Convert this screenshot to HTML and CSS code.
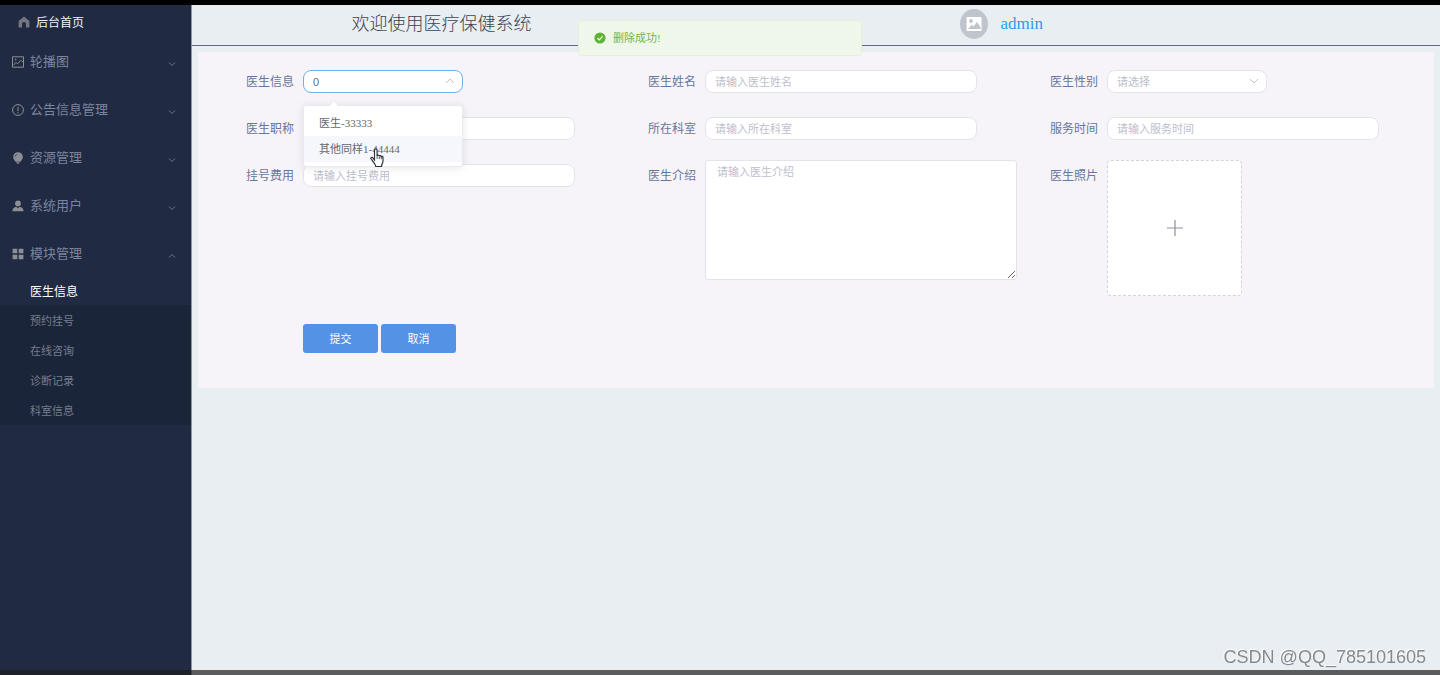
FILE: index.html
```html
<!DOCTYPE html>
<html lang="zh-CN">
<head>
<meta charset="utf-8">
<title>医疗保健系统</title>
<link rel="stylesheet" href="styles.css">
</head>
<body>
<div class="topbar"></div>
<div class="app">
  <nav class="sidebar">
    <a class="home" href="#">
      <svg class="icon" viewBox="0 0 12 12"><path d="M6 .6 11.4 5v6.4H8V8a2 2 0 0 0-4 0v3.400H.6V5z" fill="currentColor"/></svg>
      <span>后台首页</span>
    </a>
    <button class="menu-item" type="button">
      <svg class="icon" viewBox="0 0 12 12" fill="none" stroke="currentColor"><path d="M.5.8h11v10.400H.5zM1.500 9 4 6.400l1.500 1.500L9 4.200 10.800 6"/><circle cx="3.700" cy="3.700" r=".5"/></svg>
      <span>轮播图</span>
      <svg class="arrow" viewBox="0 0 8 8"><path d="m1 2.500 3 3 3-3"/></svg>
    </button>
    <button class="menu-item" type="button">
      <svg class="icon" viewBox="0 0 12 12" fill="none" stroke="currentColor"><circle cx="6" cy="6" r="5.400"/><path d="M6 2.800v4.400M6 8.200v1.200"/></svg>
      <span>公告信息管理</span>
      <svg class="arrow" viewBox="0 0 8 8"><path d="m1 2.500 3 3 3-3"/></svg>
    </button>
    <button class="menu-item" type="button">
      <svg class="icon" viewBox="0 0 12 12"><path d="M6 .2a4.800 4.800 0 0 1 4.800 4.800c0 2-1.300 3.300-2.400 4.800H3.600C2.500 8.300 1.200 7 1.200 5A4.800 4.800 0 0 1 6 .2zM4.400 10.300h3.200v.8L6 12l-1.600-.9z" fill="currentColor"/><path d="M2.900 4.700A3 3 0 0 1 5.400 2.200" fill="none" stroke="#202a42" stroke-width=".6"/></svg>
      <span>资源管理</span>
      <svg class="arrow" viewBox="0 0 8 8"><path d="m1 2.500 3 3 3-3"/></svg>
    </button>
    <button class="menu-item" type="button">
      <svg class="icon" viewBox="0 0 12 12"><circle cx="6" cy="3.400" r="2.900" fill="currentColor"/><path d="M.4 11.200C.5 8.400 2 7.200 4.200 6.700L6 8.200l1.800-1.500c2.200.5 3.700 1.700 3.800 4.500z" fill="currentColor"/></svg>
      <span>系统用户</span>
      <svg class="arrow" viewBox="0 0 8 8"><path d="m1 2.500 3 3 3-3"/></svg>
    </button>
    <button class="menu-item" type="button">
      <svg class="icon" viewBox="0 0 12 12"><path d="M.6.8h4.700v4.500H.6zM6.700.8h4.700v4.500H6.700zM.6 6.700h4.700v4.500H.6zM6.700 6.700h4.700v4.500H6.700z" fill="currentColor"/></svg>
      <span>模块管理</span>
      <svg class="arrow" viewBox="0 0 8 8"><path d="m1 5.500 3-3 3 3"/></svg>
    </button>
    <div class="submenu">
      <a class="sub-item active" href="#">医生信息</a>
      <a class="sub-item" href="#">预约挂号</a>
      <a class="sub-item" href="#">在线咨询</a>
      <a class="sub-item" href="#">诊断记录</a>
      <a class="sub-item" href="#">科室信息</a>
    </div>
  </nav>
  <div class="content">
    <header class="header">
      <h1 class="title">欢迎使用医疗保健系统</h1>
      <div class="user">
        <svg class="avatar" viewBox="0 0 28 30"><ellipse cx="14" cy="15" rx="14" ry="15" fill="#c0c4cc"/><path d="M6.500 8h15v14h-15z" fill="#fff"/><circle cx="11" cy="12" r="1.900" fill="#c0c4cc"/><path d="m8 20 3.500-4.200 2 1.700 3.500-4.500 3.500 5v2z" fill="#c0c4cc"/></svg>
        <a class="user-name" href="#">admin</a>
      </div>
    </header>
    <main class="main">
      <form class="panel">
        <div class="fields">
          <div class="field">
            <label for="info">医生信息</label>
            <div class="select-box">
              <select class="control focused" id="info"><option>0</option></select>
              <svg class="caret" viewBox="0 0 10 10"><path d="m1 7 4-4 4 4"/></svg>
              <ul class="dropdown">
                <li class="option">医生-33333</li>
                <li class="option hover">其他同样1-44444</li>
              </ul>
              <svg class="pointer" viewBox="0 0 14 20"><path d="M4.500 12V2.200a1.300 1.300 0 0 1 2.600 0V8c.2-1.200 2.100-1 2.200.2.400-.9 1.900-.6 2 .5.500-.7 1.700-.3 1.700.8V13c0 2.300-1.500 3-1.500 5.500H5.800c0-1.800-1.700-3-2.700-4.900L1 10.800c-.5-1 .8-1.900 1.800-1z" fill="#fff" stroke="#30343c" stroke-width="1.200"/><path d="M7.100 8v3M9.300 8.500v2.600M11.300 9v2.300" fill="none" stroke="#30343c" stroke-width=".8"/></svg>
            </div>
          </div>
          <div class="field">
            <label for="name">医生姓名</label>
            <input class="control" id="name" type="text" placeholder="请输入医生姓名">
          </div>
          <div class="field">
            <label for="sex">医生性别</label>
            <div class="select-box">
              <select class="control empty" id="sex"><option>请选择</option></select>
              <svg class="caret" viewBox="0 0 10 10"><path d="m1 3 4 4 4-4"/></svg>
            </div>
          </div>
          <div class="field">
            <label for="rank">医生职称</label>
            <input class="control" id="rank" type="text">
          </div>
          <div class="field">
            <label for="dept">所在科室</label>
            <input class="control" id="dept" type="text" placeholder="请输入所在科室">
          </div>
          <div class="field">
            <label for="time">服务时间</label>
            <input class="control" id="time" type="text" placeholder="请输入服务时间">
          </div>
          <div class="field">
            <label for="fee">挂号费用</label>
            <input class="control" id="fee" type="text" placeholder="请输入挂号费用">
          </div>
          <div class="field">
            <label for="intro">医生介绍</label>
            <textarea class="area" id="intro" placeholder="请输入医生介绍"></textarea>
          </div>
          <div class="field">
            <label for="photo">医生照片</label>
            <button class="upload" id="photo" type="button">
              <svg class="plus" viewBox="0 0 18 18"><path d="M9 1v16M1 9h16"/></svg>
            </button>
          </div>
        </div>
        <div class="actions">
          <button class="btn" type="button">提交</button>
          <button class="btn" type="button">取消</button>
        </div>
      </form>
    </main>
  </div>
</div>
<div class="toast" role="alert">
  <svg class="toast-icon" viewBox="0 0 12 12"><circle cx="6" cy="6" r="5.600" fill="#5fb336"/><path d="m3.500 6.100 1.800 1.800 3.300-3.500" fill="none" stroke="#fff" stroke-width="1.200"/></svg>
  <span>删除成功!</span>
</div>
<div class="watermark">CSDN @QQ_785101605</div>
<div class="bottombar"></div>
</body>
</html>
```

FILE: styles.css
```css
* { box-sizing: border-box; }

body {
  margin: 0;
  min-height: 100vh;
  display: flex;
  flex-direction: column;
  background: #e9eef3;
  font-family: "Liberation Sans", "Noto Sans CJK SC", sans-serif;
  font-size: 12px;
}

button, input, select, textarea { font-family: inherit; }
a { text-decoration: none; }

.topbar { height: 5px; background: #000; }

.app { flex: 1; display: flex; }

.sidebar {
  width: 192px;
  flex: none;
  background: #202a42;
  border-right: 1px solid #8d94a3;
  color: #8d8f96;
}

.icon { width: 12px; height: 12px; flex: none; }

.home {
  display: flex;
  align-items: center;
  gap: 6px;
  height: 33px;
  padding-left: 18px;
  color: #73767e;
}
.home span { color: #f0f2f6; }

.menu-item {
  display: flex;
  align-items: center;
  gap: 6px;
  width: 100%;
  height: 48px;
  padding: 0 15px 0 12px;
  border: 0;
  background: none;
  color: inherit;
  font-size: 13px;
  text-align: left;
}
.menu-item span { flex: 1; padding-bottom: 3px; color: #7c859f; }

.arrow {
  width: 8px;
  height: 8px;
  margin-top: 3px;
  fill: none;
  stroke: #737987;
}

.submenu { background: #1b2539; }
.sub-item {
  display: block;
  padding: 2px 0 0 30px;
  line-height: 28px;
  font-size: 11px;
  color: #757d8f;
}
.sub-item.active {
  background: #202a42;
  color: #fff;
  font-size: 12px;
  line-height: 25px;
}

.content { flex: 1; min-width: 0; }

.header {
  display: grid;
  grid-template-columns: 40% 1fr 38.5%;
  align-items: center;
  height: 41px;
  padding-bottom: 2px;
  border-bottom: 1px solid #5f6b84;
}
.title {
  margin: 0;
  font-family: "Liberation Serif", "Noto Sans CJK SC", serif;
  font-size: 18px;
  font-weight: 300;
  line-height: 24px;
  text-align: center;
  color: #3c4251;
}
.user {
  grid-column: 3;
  display: flex;
  align-items: center;
  gap: 13px;
}
.avatar { width: 28px; height: 30px; }
.user-name {
  font-family: "Liberation Serif", serif;
  font-size: 17px;
  color: #2d9cee;
}

.main { padding: 6px; }

.panel {
  padding: 14px 15px 35px;
  background: #f6f4f8;
}

.fields {
  display: grid;
  grid-template-columns: repeat(3, 1fr);
  row-gap: 17px;
}

.field {
  display: grid;
  grid-template-columns: 81px 1fr;
  column-gap: 9px;
  align-items: start;
}
.field label {
  padding-top: 2px;
  line-height: 28px;
  text-align: right;
  color: #68769a;
}

.control {
  width: 272px;
  height: 23px;
  margin: 4px 0 3px;
  padding: 0 9px;
  border: 1px solid #e3e4ea;
  border-radius: 8px;
  background: #fff;
  color: #6b6e76;
  font-size: 11px;
  outline: none;
}
.control::placeholder, .area::placeholder { color: #bcc0cb; opacity: 1; }

.select-box { position: relative; width: 160px; }
.select-box .control { width: 100%; appearance: none; }
.control.focused { border-color: #6fb1ee; }
.control.empty { color: #bcc0cb; }

.caret {
  position: absolute;
  top: 10px;
  right: 8px;
  width: 10px;
  height: 10px;
  fill: none;
  stroke: #c0c4cc;
}

.dropdown {
  position: absolute;
  z-index: 2;
  top: 39px;
  left: 0;
  width: 100%;
  margin: 0;
  padding: 4px 0;
  border: 1px solid #e8eaf0;
  border-radius: 3px;
  background: #fff;
  box-shadow: 0 1px 8px rgba(0, 0, 0, 0.1);
  list-style: none;
}
.dropdown::before {
  content: "";
  position: absolute;
  top: -4px;
  left: 26px;
  border: solid transparent;
  border-width: 0 4px 4px;
  border-bottom-color: #fff;
}
.option {
  padding-left: 15px;
  font-family: "Liberation Serif", "Noto Sans CJK SC", serif;
  font-size: 11px;
  line-height: 26px;
  color: #66686e;
}
.option.hover { background: #f5f7fc; }

.pointer {
  position: absolute;
  z-index: 3;
  top: 82px;
  left: 67px;
  width: 14px;
  height: 20px;
}

.area {
  width: 312px;
  height: 120px;
  padding: 3px 11px;
  border: 1px solid #e3e4ea;
  border-radius: 3px;
  background: #fff;
  font-size: 11px;
  line-height: 16px;
  outline: none;
}

.upload {
  display: flex;
  align-items: center;
  justify-content: center;
  width: 135px;
  height: 136px;
  border: 1px dashed #d2d3d8;
  border-radius: 4px;
  background: #fff;
}
.plus { width: 18px; height: 18px; fill: none; stroke: #8c939d; stroke-width: 1.2; }

.actions {
  display: flex;
  gap: 3px;
  padding: 28px 0 0 90px;
}
.btn {
  width: 75px;
  height: 29px;
  padding: 0 0 2px;
  border: 0;
  border-radius: 3px;
  background: #5392e4;
  color: #fff;
  font-size: 11px;
}

.toast {
  position: fixed;
  z-index: 5;
  top: 20px;
  left: 0;
  right: 0;
  display: flex;
  align-items: center;
  gap: 7px;
  width: 284px;
  height: 36px;
  margin: 0 auto;
  padding-left: 15px;
  border: 1px solid #e4f2dc;
  border-radius: 3px;
  background: #eff7ea;
  color: #70b74e;
  font-family: "Liberation Serif", "Noto Sans CJK SC", serif;
  font-size: 11px;
}
.toast span { padding-bottom: 2px; }
.toast-icon { width: 12px; height: 12px; }

.watermark {
  position: fixed;
  right: 14px;
  bottom: 6px;
  font-size: 18px;
  line-height: 24px;
  color: #85898d;
  text-shadow: -1px -1px 0 #fff;
}

.bottombar {
  position: fixed;
  left: 0;
  right: 0;
  bottom: 0;
  height: 5px;
  background: rgba(30, 30, 30, 0.7);
}
```
